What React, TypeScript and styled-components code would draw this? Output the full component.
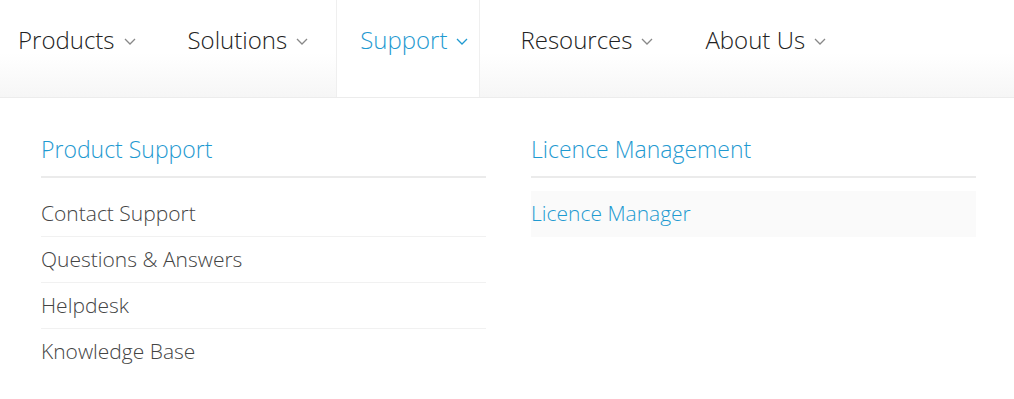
import React from "react";
import styled, { createGlobalStyle } from "styled-components";

const GlobalStyle = createGlobalStyle`
  html, body {
    margin: 0;
    padding: 0;
    background: #ffffff;
  }
  body {
    font-family: "Open Sans", "Liberation Sans", sans-serif;
    overflow: hidden;
  }
  * {
    box-sizing: border-box;
  }
`;

type NavItem = { label: string; active?: boolean };

const navItems: NavItem[] = [
  { label: "Products" },
  { label: "Solutions" },
  { label: "Support", active: true },
  { label: "Resources" },
  { label: "About Us" },
];

type LinkGroup = {
  title: string;
  links: { label: string; current?: boolean }[];
};

const groups: LinkGroup[] = [
  {
    title: "Product Support",
    links: [
      { label: "Contact Support" },
      { label: "Questions & Answers" },
      { label: "Helpdesk" },
      { label: "Knowledge Base" },
    ],
  },
  {
    title: "Licence Management",
    links: [{ label: "Licence Manager", current: true }],
  },
];

function Chevron() {
  return (
    <svg width="12" height="7" viewBox="0 0 12 7" fill="none">
      <path d="M1 1l5 5 5-5" stroke="currentColor" strokeWidth="1.3" />
    </svg>
  );
}

export default function App() {
  return (
    <>
      <GlobalStyle />
      <Header>
        <NavList>
          {navItems.map((item) => (
            <NavButton key={item.label} $active={item.active}>
              <span>{item.label}</span>
              <Caret $active={item.active}>
                <Chevron />
              </Caret>
            </NavButton>
          ))}
        </NavList>
      </Header>
      <MegaMenu>
        {groups.map((group) => (
          <Column key={group.title}>
            <ColumnTitle>{group.title}</ColumnTitle>
            <LinkList>
              {group.links.map((link) => (
                <LinkRow key={link.label} $current={link.current}>
                  {link.label}
                </LinkRow>
              ))}
            </LinkList>
          </Column>
        ))}
      </MegaMenu>
    </>
  );
}

const Header = styled.header`
  height: 98px;
  border-bottom: 1px solid #ececec;
  background: linear-gradient(to bottom, #ffffff 0%, #ffffff 55%, #f6f6f6 100%);
`;

const NavList = styled.nav`
  display: flex;
  gap: 16px;
  height: 100%;
  margin-left: -6px;
`;

const NavButton = styled.div<{ $active?: boolean }>`
  display: flex;
  align-items: center;
  gap: 9px;
  height: 100%;
  padding: 0 11px 18px 23px;
  font-size: 24px;
  font-weight: 300;
  color: ${(p) => (p.$active ? "#1f9ad1" : "#222222")};
  background: ${(p) => (p.$active ? "#ffffff" : "transparent")};
  border-left: 1px solid ${(p) => (p.$active ? "#efefef" : "transparent")};
  border-right: 1px solid ${(p) => (p.$active ? "#efefef" : "transparent")};
  cursor: pointer;
`;

const Caret = styled.span<{ $active?: boolean }>`
  display: flex;
  color: ${(p) => (p.$active ? "#1f9ad1" : "#888888")};
  margin-top: 3px;
`;

const MegaMenu = styled.div`
  display: grid;
  grid-template-columns: 445px 445px;
  gap: 45px;
  padding: 35px 38px 0 41px;
`;

const Column = styled.section`
  display: flex;
  flex-direction: column;
`;

const ColumnTitle = styled.h3`
  margin: 0;
  height: 45px;
  line-height: 32px;
  font-size: 23px;
  font-weight: 300;
  color: #1f9ad1;
  border-bottom: 2px solid #ebebeb;
`;

const LinkList = styled.div`
  display: flex;
  flex-direction: column;
  margin-top: 13px;
`;

const LinkRow = styled.a<{ $current?: boolean }>`
  display: flex;
  align-items: center;
  height: 46px;
  font-size: 21px;
  font-weight: 300;
  color: ${(p) => (p.$current ? "#1f9ad1" : "#444444")};
  background: ${(p) => (p.$current ? "#fafafa" : "transparent")};
  border-bottom: 1px solid #f1f1f1;
  padding-bottom: 1px;
  cursor: pointer;

  &:last-child {
    border-bottom-color: ${(p) => (p.$current ? "#fafafa" : "transparent")};
  }
`;
